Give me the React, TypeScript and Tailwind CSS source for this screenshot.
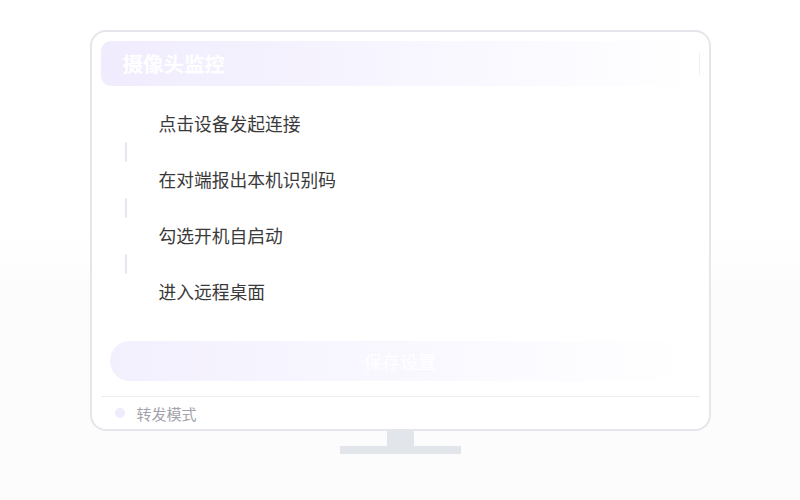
import React from "react"

const steps = ["点击设备发起连接", "在对端报出本机识别码", "勾选开机自启动", "进入远程桌面"]

export default function App() {
  return (
    <div
      className="w-[800px] h-[500px] bg-gradient-to-b from-white from-45% to-[#fcfcfd] to-60% flex flex-col items-center pt-[30px]"
      style={{ fontFamily: '"Noto Sans CJK SC", "Noto Sans", sans-serif' }}
    >
      {/* monitor screen */}
      <div className="w-[621px] h-[401px] bg-white border-2 border-[#e4e6eb] rounded-[16px] flex flex-col px-[9px] pt-[9px]">
        <div className="h-[45px] shrink-0 rounded-[10px] bg-gradient-to-r from-[#f0ecfe] to-[#f0ecfe]/0 flex items-center pl-[22px]">
          <span className="text-[20.5px] font-bold text-white leading-none">摄像头监控</span>
          <span className="ml-auto w-px h-[22px] bg-[#eef0f3]" />
        </div>

        {/* steps */}
        <div className="flex flex-col mt-[26px]">
          {steps.map((s, i) => (
            <div key={s} className="flex flex-col">
              <div className="h-[24px] flex items-center pl-[58px] text-[17.75px] text-[#3a3a3a] leading-none">{s}</div>
              {i < steps.length - 1 && (
                <div className="h-[32px] flex items-center pl-[24px]">
                  <span className="w-[2px] h-[20px] bg-[#e6e6ee] rounded-full" />
                </div>
              )}
            </div>
          ))}
        </div>

        <button className="mt-[37px] mx-[9px] h-[40px] shrink-0 rounded-full bg-gradient-to-r from-[#f3f0fe] to-[#f3f0fe]/0 text-white text-[18px] flex items-center justify-center">
          保存设置
        </button>

        <div className="mt-[15px] border-t border-[#eeeeef]" />
        <div className="h-[32px] flex items-center pl-[14px] gap-[12px]">
          <span className="w-[10px] h-[10px] rounded-full bg-[#eeebfc]" />
          <span className="text-[15px] text-[#a3a3ab] leading-none">转发模式</span>
        </div>
      </div>

      {/* stand */}
      <div className="w-[27px] h-[15px] bg-[#e2e5e9]" />
      <div className="w-[121px] h-[8px] bg-[#e2e5e9]" />
    </div>
  )
}
